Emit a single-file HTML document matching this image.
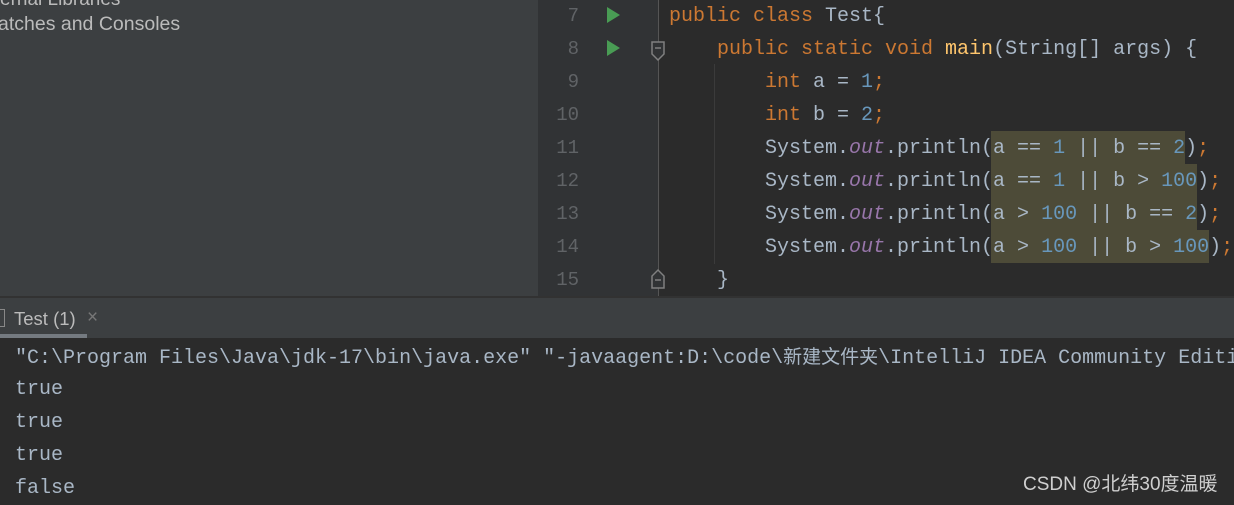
<!DOCTYPE html>
<html><head><meta charset="utf-8"><style>
body{margin:0;width:1234px;height:505px;overflow:hidden;background:#2b2b2b;position:relative;font-family:"Liberation Mono",monospace;}
.a{position:absolute;}
.m{font-size:20px;line-height:33px;white-space:pre;color:#a9b7c6;}
.k{color:#cc7832}.n{color:#6897bb}.f{color:#ffc66d}.o{color:#9876aa;font-style:italic}
.ln{position:absolute;left:538px;width:41px;text-align:right;color:#606366;font-size:19px;line-height:33px;}
.hl{position:absolute;background:#4d4b38;}
</style></head><body>
<div class="a" style="left:0;top:0;width:538px;height:297px;background:#3c3f41"></div>
<div class="a" style="left:538px;top:0;width:120px;height:297px;background:#313335"></div>
<div class="a" style="left:658px;top:0;width:1px;height:297px;background:#555"></div>
<div class="a" style="left:714px;top:64px;width:1px;height:200px;background:#3b3b3b"></div>
<div class="a" style="left:0;top:-11px;font-family:'Liberation Sans',sans-serif;font-size:19px;color:#bbbbbb">ernal Libraries</div>
<div class="a" style="left:-2px;top:13px;font-family:'Liberation Sans',sans-serif;font-size:19.5px;color:#bbbbbb">atches and Consoles</div>

<div class="ln" style="top:0">7</div><div class="ln" style="top:33px">8</div><div class="ln" style="top:66px">9</div><div class="ln" style="top:99px">10</div><div class="ln" style="top:132px">11</div><div class="ln" style="top:165px">12</div><div class="ln" style="top:198px">13</div><div class="ln" style="top:231px">14</div><div class="ln" style="top:264px">15</div>
<svg class="a" style="left:600px;top:0" width="70" height="297">
<polygon points="7,7 20,15 7,23" fill="#499c54"/><polygon points="7,40 20,48 7,56" fill="#499c54"/>
<path d="M52,42h12v12l-6,6l-6,-6z" fill="#313335" stroke="#808080" stroke-width="1.5"/><line x1="55" y1="48" x2="61" y2="48" stroke="#808080" stroke-width="1.5"/>
<path d="M52,288h12v-12l-6,-6l-6,6z" fill="#313335" stroke="#808080" stroke-width="1.5"/><line x1="55" y1="280" x2="61" y2="280" stroke="#808080" stroke-width="1.5"/>
</svg>

<div class="hl" style="left:991px;top:131px;width:194px;height:33px"></div>
<div class="hl" style="left:991px;top:164px;width:206px;height:66px"></div>
<div class="hl" style="left:991px;top:230px;width:218px;height:33px"></div>

<div class="a m" style="left:669px;top:0"><span class="k">public class </span>Test{</div>
<div class="a m" style="left:717px;top:33px"><span class="k">public static void </span><span class="f">main</span>(String[] args) {</div>
<div class="a m" style="left:765px;top:66px"><span class="k">int </span>a = <span class="n">1</span><span class="k">;</span></div>
<div class="a m" style="left:765px;top:99px"><span class="k">int </span>b = <span class="n">2</span><span class="k">;</span></div>
<div class="a m" style="left:765px;top:132px">System.<span class="o">out</span>.println(a == <span class="n">1</span> || b == <span class="n">2</span>)<span class="k">;</span></div>
<div class="a m" style="left:765px;top:165px">System.<span class="o">out</span>.println(a == <span class="n">1</span> || b &gt; <span class="n">100</span>)<span class="k">;</span></div>
<div class="a m" style="left:765px;top:198px">System.<span class="o">out</span>.println(a &gt; <span class="n">100</span> || b == <span class="n">2</span>)<span class="k">;</span></div>
<div class="a m" style="left:765px;top:231px">System.<span class="o">out</span>.println(a &gt; <span class="n">100</span> || b &gt; <span class="n">100</span>)<span class="k">;</span></div>
<div class="a m" style="left:717px;top:264px">}</div>

<div class="a" style="left:0;top:296px;width:1234px;height:2px;background:#323232"></div>
<div class="a" style="left:0;top:298px;width:1234px;height:40px;background:#3c3f41"></div>
<div class="a" style="left:0;top:309px;width:4px;height:16px;border:1px solid #888;border-left:none"></div>
<div class="a" style="left:14px;top:308px;font-family:'Liberation Sans',sans-serif;font-size:18.5px;color:#bbbbbb">Test (1)</div>
<div class="a" style="left:87px;top:307px;font-family:'Liberation Sans',sans-serif;font-size:19px;color:#777">×</div>
<div class="a" style="left:0;top:334px;width:87px;height:4px;background:#747a80"></div>

<div class="a m" style="left:15px;top:339px">"C:\Program Files\Java\jdk-17\bin\java.exe" "-javaagent:D:\code\<span style="font-family:'Noto Sans CJK SC',sans-serif;font-size:19px">新建文件夹</span>\IntelliJ IDEA Community Edition</div>
<div class="a m" style="left:15px;top:373px">true</div>
<div class="a m" style="left:15px;top:406px">true</div>
<div class="a m" style="left:15px;top:439px">true</div>
<div class="a m" style="left:15px;top:472px">false</div>
<div class="a" style="left:1023px;top:472px;font-family:'Liberation Sans','Noto Sans CJK SC',sans-serif;font-size:19px;line-height:26px;color:#cfcfcf">CSDN @北纬30度温暖</div>
</body></html>
